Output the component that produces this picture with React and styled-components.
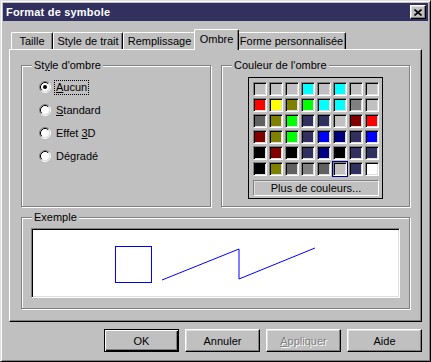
import styled, { createGlobalStyle } from "styled-components";

const GlobalStyle = createGlobalStyle`
  html, body {
    margin: 0;
    padding: 0;
    background: #c0c0c0;
  }
  body {
    font-family: "Liberation Sans", Arial, sans-serif;
    font-size: 11px;
    color: #000;
  }
`;

const TITLE_BLUE = "#31305f";

const Window = styled.div`
  box-sizing: border-box;
  width: 431px;
  height: 362px;
  background: #c0c0c0;
  border: 1px solid;
  border-color: #dfdfdf #000 #000 #dfdfdf;
  box-shadow: inset 1px 1px 0 #fff, inset -1px -1px 0 #808080;
  padding: 2px;
  display: flex;
  flex-direction: column;
`;

const TitleBar = styled.div`
  height: 18px;
  background: ${TITLE_BLUE};
  display: flex;
  align-items: center;
  justify-content: space-between;
  padding-left: 3px;
  margin-bottom: 8px;
`;

const Title = styled.span`
  color: #fff;
  font-weight: bold;
  font-size: 11px;
  letter-spacing: 0.2px;
`;

const CloseButton = styled.button`
  box-sizing: border-box;
  width: 16px;
  height: 14px;
  margin-right: 2px;
  padding: 0;
  background: #c0c0c0;
  border: 1px solid;
  border-color: #fff #000 #000 #fff;
  box-shadow: inset -1px -1px 0 #808080, inset 1px 1px 0 #dfdfdf;
  display: flex;
  align-items: center;
  justify-content: center;
`;

const Body = styled.div`
  padding: 0 6px;
  display: flex;
  flex-direction: column;
`;

const TabRow = styled.div`
  height: 20px;
  display: flex;
  align-items: flex-end;
  padding-left: 2px;
`;

const Tab = styled.div`
  box-sizing: border-box;
  width: ${(p) => p.$width}px;
  height: ${(p) => (p.$active ? 21 : 17)}px;
  margin: ${(p) => (p.$active ? "0 -2px -1px" : "0")};
  padding-bottom: ${(p) => (p.$active ? 3 : 0)}px;
  position: relative;
  z-index: ${(p) => (p.$active ? 1 : 0)};
  background: #c0c0c0;
  border-top: 1px solid #fff;
  border-left: 1px solid #fff;
  border-right: 1px solid #000;
  border-radius: 2px 2px 0 0;
  box-shadow: inset -1px 0 0 #808080;
  display: flex;
  align-items: center;
  justify-content: center;
  white-space: nowrap;
`;

const Panel = styled.div`
  box-sizing: border-box;
  height: 273px;
  border: 1px solid;
  border-color: #fff #000 #000 #fff;
  box-shadow: inset -1px -1px 0 #808080;
  padding: 15px 10px 0 11px;
  display: flex;
  flex-direction: column;
  gap: 10px;
`;

const GroupRow = styled.div`
  display: flex;
  gap: 10px;
`;

const Group = styled.div`
  box-sizing: border-box;
  position: relative;
  width: ${(p) => p.$width}px;
  height: ${(p) => p.$height}px;
  border: 1px solid #808080;
  box-shadow: inset 1px 1px 0 #fff, 1px 1px 0 #fff;
`;

const Legend = styled.span`
  position: absolute;
  top: -8px;
  left: 10px;
  padding: 0 2px;
  line-height: 14px;
  background: #c0c0c0;
  white-space: nowrap;
`;

const RadioList = styled.div`
  display: flex;
  flex-direction: column;
  gap: 9px;
  padding: 14px 0 0 17px;
`;

const RadioRow = styled.div`
  height: 14px;
  display: flex;
  align-items: center;
`;

const RadioLabel = styled.span`
  margin-left: 3px;
  padding: 0 1px;
  line-height: 13px;
  border: 1px dotted ${(p) => (p.$focused ? "#000" : "transparent")};
`;

const ColorBox = styled.div`
  width: fit-content;
  margin: 11px auto 0;
  border: 1px solid #000;
  padding: 4px 3px 2px 4px;
`;

const SwatchGrid = styled.div`
  display: grid;
  grid-template-columns: repeat(8, 14px);
  grid-auto-rows: 14px;
  gap: 2px;
`;

const Swatch = styled.div`
  box-sizing: border-box;
  background: ${(p) => p.$color};
  border: 1px solid;
  border-color: #808080 #fff #fff #808080;
  box-shadow: inset 1px 1px 0 #000, inset -1px -1px 0 #dfdfdf;
  outline: ${(p) => (p.$selected ? "1px solid #000080" : "none")};
`;

const MoreButton = styled.div`
  box-sizing: border-box;
  height: 16px;
  margin-top: 4px;
  border: 1px solid;
  border-color: #808080 #fff #fff #808080;
  box-shadow: inset 1px 1px 0 #dfdfdf;
  display: flex;
  align-items: center;
  justify-content: center;
`;

const Preview = styled.div`
  box-sizing: border-box;
  height: 70px;
  margin: 10px 9px;
  background: #fff;
  border: 1px solid;
  border-color: #808080 #fff #fff #808080;
  box-shadow: inset 1px 1px 0 #000, inset -1px -1px 0 #dfdfdf;
  padding: 1px;
`;

const Footer = styled.div`
  margin-top: 7px;
  display: flex;
  justify-content: flex-end;
  gap: 6px;
`;

const Button = styled.button`
  box-sizing: border-box;
  width: 75px;
  height: 23px;
  padding: 0;
  background: #c0c0c0;
  font-family: "Liberation Sans", Arial, sans-serif;
  font-size: 11px;
  color: ${(p) => (p.disabled ? "#808080" : "#000")};
  text-shadow: ${(p) => (p.disabled ? "1px 1px 0 #fff" : "none")};
  border: 1px solid;
  border-color: ${(p) => (p.$default ? "#000" : "#fff #000 #000 #fff")};
  box-shadow: ${(p) =>
    p.$default
      ? "inset 1px 1px 0 #fff, inset -1px -1px 0 #000, inset -2px -2px 0 #808080"
      : "inset -1px -1px 0 #808080, inset 1px 1px 0 #dfdfdf"};
`;

const Radio = ({ checked }) => (
  <svg width="12" height="12" viewBox="0 0 12 12">
    <circle cx="6" cy="6" r="4.5" fill="#fff" />
    <path d="M2.11 9.89 A5.5 5.5 0 0 1 9.89 2.11" fill="none" stroke="#808080" />
    <path d="M9.89 2.11 A5.5 5.5 0 0 1 2.11 9.89" fill="none" stroke="#fff" />
    <path d="M2.82 9.18 A4.5 4.5 0 0 1 9.18 2.82" fill="none" stroke="#000" />
    <path d="M9.18 2.82 A4.5 4.5 0 0 1 2.82 9.18" fill="none" stroke="#dfdfdf" />
    {checked && <circle cx="6" cy="6" r="2" fill="#000" />}
  </svg>
);

const tabs = [
  { label: "Taille", width: 42 },
  { label: "Style de trait", width: 70 },
  { label: "Remplissage", width: 73 },
  { label: "Ombre", width: 45, active: true },
  { label: "Forme personnalisée", width: 109 },
];

const radios = [
  { label: <><u>A</u>ucun</>, checked: true },
  { label: <><u>S</u>tandard</> },
  { label: <>Effet <u>3</u>D</> },
  { label: <>Dégradé</> },
];

const B = TITLE_BLUE;
const swatches = [
  ["#c0c0c0", "#c0c0c0", "#c0c0c0", "#00ffff", "#c0c0c0", "#00ffff", "#c0c0c0", "#c0c0c0"],
  ["#ff0000", "#ffff00", "#808000", "#00ff00", "#00ffff", "#00ffff", "#808080", "#c0c0c0"],
  ["#606060", "#808000", "#00ff00", B, B, "#c0c0c0", "#800000", "#ff0000"],
  ["#800000", "#808000", "#00ff00", B, "#0000ff", "#000080", B, "#0000ff"],
  ["#000000", "#800000", "#000000", B, "#000080", "#000000", B, B],
  ["#000000", "#808000", "#606060", "#808080", "#606060", "#c0c0c0", B, "#ffffff"],
];

const App = () => {
  return (
    <>
      <GlobalStyle />
      <Window>
        <TitleBar>
          <Title>Format de symbole</Title>
          <CloseButton>
            <svg width="8" height="7" viewBox="0 0 8 7">
              <path d="M0.5 0.5 L7.5 6.5 M7.5 0.5 L0.5 6.5" stroke="#000" strokeWidth="1.6" />
            </svg>
          </CloseButton>
        </TitleBar>

        <Body>
          <TabRow>
            {tabs.map((t) => (
              <Tab key={t.label} $width={t.width} $active={t.active}>
                {t.label}
              </Tab>
            ))}
          </TabRow>

          <Panel>
            <GroupRow>
              <Group $width={190} $height={142}>
                <Legend>St<u>y</u>le d'ombre</Legend>
                <RadioList>
                  {radios.map((r, i) => (
                    <RadioRow key={i}>
                      <Radio checked={r.checked} />
                      <RadioLabel $focused={r.checked}>{r.label}</RadioLabel>
                    </RadioRow>
                  ))}
                </RadioList>
              </Group>

              <Group $width={189} $height={142}>
                <Legend>Couleur de l'ombre</Legend>
                <ColorBox>
                  <SwatchGrid>
                    {swatches.flatMap((row, r) =>
                      row.map((c, col) => (
                        <Swatch key={`${r}-${col}`} $color={c} $selected={r === 5 && col === 5} />
                      ))
                    )}
                  </SwatchGrid>
                  <MoreButton>Plus de couleurs...</MoreButton>
                </ColorBox>
              </Group>
            </GroupRow>

            <Group $width={389} $height={92}>
              <Legend>Exemple</Legend>
              <Preview>
                <svg width="365" height="66" viewBox="0 0 365 66">
                  <rect x="82.5" y="16.5" width="36" height="36" fill="none" stroke="#0000ff" shapeRendering="crispEdges" />
                  <polyline points="129,50 206,19 206,49 282,18" fill="none" stroke="#0000ff" />
                </svg>
              </Preview>
            </Group>
          </Panel>

          <Footer>
            <Button $default>OK</Button>
            <Button>Annuler</Button>
            <Button disabled><u>A</u>ppliquer</Button>
            <Button>Aide</Button>
          </Footer>
        </Body>
      </Window>
    </>
  );
};

export default App;
